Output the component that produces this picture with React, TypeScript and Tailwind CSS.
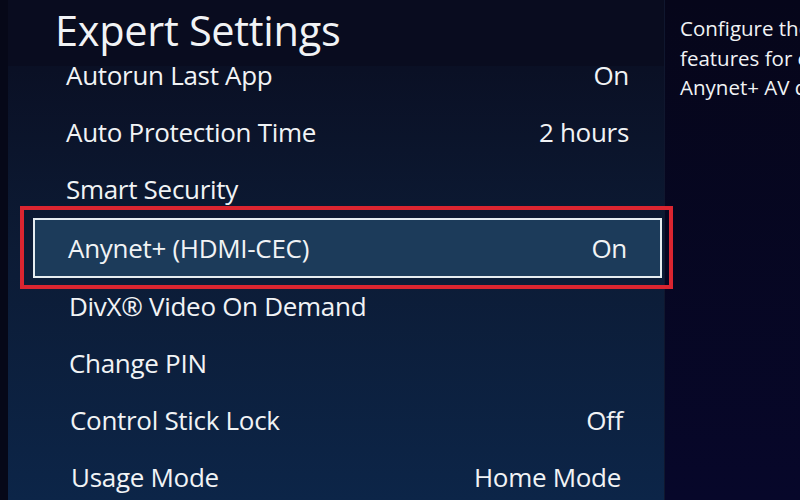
const rows = [
  { label: "Autorun Last App", value: "On", pl: "pl-[33px]", pr: "pr-[33px]" },
  { label: "Auto Protection Time", value: "2 hours", pl: "pl-[33px]", pr: "pr-[33px]" },
  { label: "Smart Security", value: "", pl: "pl-[33px]", pr: "pr-[33px]" },
]

const rowsAfter = [
  { label: "DivX® Video On Demand", value: "", pl: "pl-[36px]", pr: "pr-[35px]" },
  { label: "Change PIN", value: "", pl: "pl-[36px]", pr: "pr-[36px]" },
  { label: "Control Stick Lock", value: "Off", pl: "pl-[37px]", pr: "pr-[39px]" },
  { label: "Usage Mode", value: "Home Mode", pl: "pl-[38px]", pr: "pr-[41px]" },
]

function Row({
  label,
  value,
  pl,
  pr,
}: {
  label: string
  value: string
  pl: string
  pr: string
}) {
  return (
    <div className={`h-[57px] flex items-center justify-between ${pl} ${pr}`}>
      <span>{label}</span>
      {value && <span>{value}</span>}
    </div>
  )
}

export default function App() {
  return (
    <div
      className="w-[800px] h-[500px] overflow-hidden flex bg-[#05041a] text-[#f1f3f5]"
      style={{ fontFamily: '"Open Sans", "Noto Sans", sans-serif' }}
    >
      {/* Left edge of the screen */}
      <div className="w-[8px] bg-[#060818]" />

      {/* Settings list panel */}
      <div className="w-[657px] flex flex-col bg-linear-to-b from-[#090c1f] via-[#0c1b35] to-[#0c2548] border-r border-[#10172e]">
        <div className="h-[66px] shrink-0 pl-[47px] pt-[3px] text-[41.5px] leading-[54px] tracking-[-0.3px] relative z-10 bg-[#090c1f]">
          Expert Settings
        </div>
        <div className="flex-1 pl-[25px] pr-[2px] text-[26px] font-medium tracking-[-0.3px]">
          <div className="-mt-[19px]">
            {rows.map(r => (
              <Row key={r.label} {...r} />
            ))}
            <div className="relative h-[60px] border-2 border-[#e6ecf0] bg-[#1c3b5a] flex items-center justify-between pl-[33px] pr-[33px]">
              <span>Anynet+ (HDMI-CEC)</span>
              <span>On</span>
              <div className="absolute -left-[15px] -right-[13px] -top-[14px] -bottom-[13px] border-4 border-[#db2530] pointer-events-none" />
            </div>
            {rowsAfter.map(r => (
              <Row key={r.label} {...r} />
            ))}
          </div>
        </div>
      </div>

      {/* Description panel */}
      <div className="flex-1 overflow-hidden pl-[15px] pt-[14px] text-[20.5px] leading-[29.5px] bg-linear-to-b from-[#06061a] to-[#07072a] whitespace-nowrap">
        <div>Configure the Anynet+</div>
        <div>features for connected</div>
        <div>Anynet+ AV devices.</div>
      </div>
    </div>
  )
}
